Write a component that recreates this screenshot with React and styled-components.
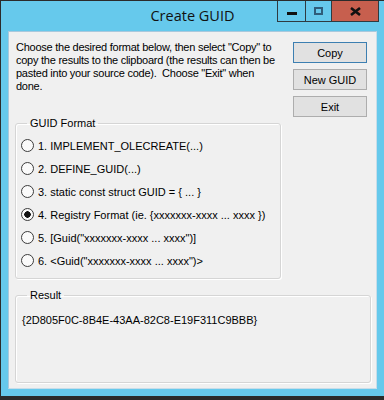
import React from 'react';
import styled, { createGlobalStyle } from 'styled-components';

const GlobalStyle = createGlobalStyle`
  html, body {
    margin: 0;
    padding: 0;
    background: #2b2b2b;
    overflow: hidden;
  }
  body {
    width: 384px;
    height: 400px;
  }
`;

const formats = [
  '1. IMPLEMENT_OLECREATE(...)',
  '2. DEFINE_GUID(...)',
  '3. static const struct GUID = { ... }',
  '4. Registry Format (ie. {xxxxxxx-xxxx ... xxxx })',
  '5. [Guid("xxxxxxx-xxxx ... xxxx")]',
  '6. <Guid("xxxxxxx-xxxx ... xxxx")>',
];

const App = () => {
  return (
    <>
      <GlobalStyle />
      <Window>
        <TitleBar>
          <span />
          <Title>Create GUID</Title>
          <Caption>
            <CaptionBtn $w={27}>
              <MinGlyph />
            </CaptionBtn>
            <CaptionBtn $w={26}>
              <MaxGlyph />
            </CaptionBtn>
            <CaptionBtn $w={47} $close>
              <svg width='11' height='9' viewBox='0 0 11 9'>
                <path d='M1 1 L10 8 M10 1 L1 8' stroke='#111' strokeWidth='2.6' />
              </svg>
            </CaptionBtn>
          </Caption>
        </TitleBar>
        <Client>
          <TopRow>
            <Intro>
              Choose the desired format below, then select "Copy" to
              <br />
              copy the results to the clipboard (the results can then be
              <br />
              pasted into your source code).&nbsp; Choose "Exit" when
              <br />
              done.
            </Intro>
            <Buttons>
              <PushButton $default>Copy</PushButton>
              <PushButton>New GUID</PushButton>
              <PushButton>Exit</PushButton>
            </Buttons>
          </TopRow>
          <Group $w={266} $h={162}>
            <legend>GUID Format</legend>
            <RadioList>
              {formats.map((f, i) => (
                <RadioRow key={f}>
                  <RadioDot $checked={i === 3} />
                  <span>{f}</span>
                </RadioRow>
              ))}
            </RadioList>
          </Group>
          <Group $w={356} $h={94} $gap={10}>
            <legend>Result</legend>
            <ResultText>{'{2D805F0C-8B4E-43AA-82C8-E19F311C9BBB}'}</ResultText>
          </Group>
        </Client>
      </Window>
    </>
  );
};

const Window = styled.div`
  box-sizing: border-box;
  width: 384px;
  height: 396px;
  border-top: 1px solid #2b2b2b;
  border-left: 1px solid #2b2b2b;
  background: #66c9ec;
  display: flex;
  flex-direction: column;
  padding: 0 7px 7px 7px;
`;

const TitleBar = styled.div`
  height: 30px;
  flex: none;
  display: grid;
  grid-template-columns: 1fr auto 1fr;
  margin: 0 -7px;
`;

const Title = styled.div`
  font-family: 'Open Sans', 'Noto Sans', sans-serif;
  font-size: 14.5px;
  color: #111;
  line-height: 30px;
`;

const Caption = styled.div`
  justify-self: end;
  align-self: start;
  display: flex;
  margin-right: 5px;
  height: 20px;
  border-left: 1px solid #2f3a40;
  border-right: 1px solid #2f3a40;
  border-bottom: 1px solid #2f3a40;
`;

const CaptionBtn = styled.div`
  box-sizing: border-box;
  width: ${(p) => p.$w}px;
  height: 100%;
  display: flex;
  align-items: center;
  justify-content: center;
  background: ${(p) => (p.$close ? '#c75f4e' : '#66c9ec')};
  & + & {
    border-left: 1px solid #2f3a40;
  }
`;

const MinGlyph = styled.div`
  width: 10px;
  height: 3px;
  background: #111;
  margin-top: 4px;
`;

const MaxGlyph = styled.div`
  box-sizing: border-box;
  width: 9px;
  height: 8px;
  border: 2px solid #2f5d7a;
  margin-top: -1px;
`;

const Client = styled.div`
  flex: 1;
  box-sizing: border-box;
  background: #f0f0f0;
  border: 1px solid #a9c9dd;
  border-right-color: #c8dde9;
  border-bottom-color: #c8dde9;
  padding: 0 0 0 6px;
  font-family: 'Liberation Sans', Arial, sans-serif;
  font-size: 11px;
  color: #000;
`;

const TopRow = styled.div`
  display: flex;
  justify-content: space-between;
  height: 85px;
`;

const Intro = styled.p`
  margin: 9px 0 0 1px;
  line-height: 13px;
  white-space: nowrap;
  letter-spacing: -0.25px;
`;

const Buttons = styled.div`
  display: flex;
  flex-direction: column;
  gap: 6px;
  margin: 10px 9px 0 0;
`;

const PushButton = styled.button`
  box-sizing: border-box;
  width: 74px;
  height: 21px;
  padding: 0;
  background: #e1e1e1;
  border: 1px solid ${(p) => (p.$default ? '#3c7fb1' : '#adadad')};
  font-family: 'Liberation Sans', Arial, sans-serif;
  font-size: 11px;
  color: #000;
`;

const Group = styled.fieldset`
  box-sizing: border-box;
  width: ${(p) => p.$w}px;
  height: ${(p) => p.$h}px;
  margin: ${(p) => p.$gap || 0}px 0 0 0;
  padding: 4px 0 0 5px;
  border: 1px solid #d5d5d5;
  border-radius: 3px;
  box-shadow: inset 1px 1px 0 #fff, 1px 1px 0 #fff;

  legend {
    margin-left: 6px;
    padding: 0 3px;
    line-height: 13px;
  }
`;

const RadioList = styled.div`
  display: flex;
  flex-direction: column;
`;

const RadioRow = styled.div`
  display: flex;
  align-items: center;
  gap: 4px;
  height: 23px;
`;

const RadioDot = styled.span`
  box-sizing: border-box;
  width: 13px;
  height: 13px;
  border-radius: 50%;
  border: 1px solid #3c3c3c;
  background: ${(p) =>
    p.$checked
      ? 'radial-gradient(circle, #111 0 3px, #fafafa 3.5px)'
      : '#fafafa'};
`;

const ResultText = styled.div`
  margin: 8px 0 0 1px;
  line-height: 13px;
`;

export default App;
